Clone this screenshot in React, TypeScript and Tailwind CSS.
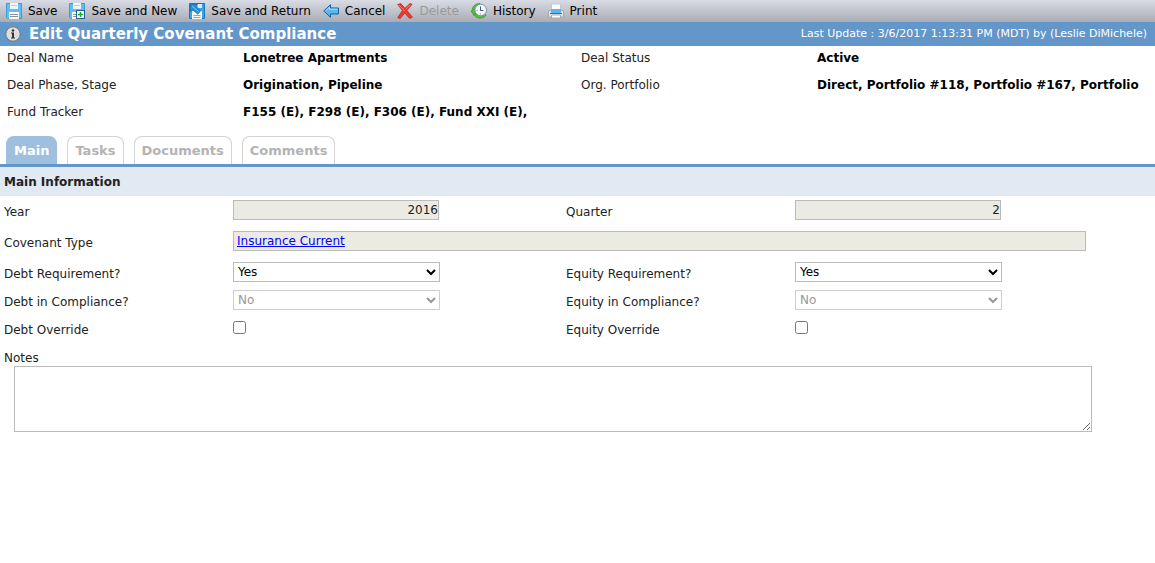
import type { ReactNode } from "react";

const Disk = () => (
    <>
        <path d="M.5 .5h15v15h-14l-1-1z" fill="#62bdf0" stroke="#3f9ad0" />
        <path d="M4 0h8v6H4z" fill="#eef4f8" />
        <path d="M5 2.500h6" stroke="#c3d0da" />
        <path d="M3 9h10v7H3z" fill="#f8f8f8" />
        <path d="M4 11.500h8M4 13.500h8" stroke="#8b949b" />
    </>
);

const Icon = ({ children }: { children: ReactNode }) => (
    <svg viewBox="0 0 16 16" className="h-4 w-4 shrink-0" aria-hidden="true">
        {children}
    </svg>
);

const SaveIcon = () => (
    <Icon>
        <Disk />
    </Icon>
);

const SaveNewIcon = () => (
    <Icon>
        <Disk />
        <rect x="7.500" y="7.500" width="8" height="8" fill="#fff" stroke="#1f5f96" />
        <path d="M11.500 9v5M9 11.500h5" stroke="#23a52b" strokeWidth="1.500" />
    </Icon>
);

const SaveReturnIcon = () => (
    <Icon>
        <path d="M.5 .5h15v15H.5z" fill="#3aa2e2" stroke="#1c76b4" />
        <path d="M3 8h10v8H3z" fill="#f5f7f9" />
        <path d="M4.500 12.500h7M4.500 14.500h7" stroke="#9aa2a8" />
        <path d="M8 1h5v4H9z" fill="#d5ebf8" />
        <path d="M1.500 1.500h7L6.300 3.700l5.200 4.200-2.700 3.300-5.300-4.700-2 2z" fill="#2790d6" stroke="#1668a8" strokeWidth=".7" strokeLinejoin="round" />
        <path d="M3 3l6.500 5.500" stroke="#82cdf6" />
    </Icon>
);

const CancelIcon = () => (
    <Icon>
        <path d="M.7 8L7.500 1.700V5h8v6h-8v3.300z" fill="#55b9f0" stroke="#145f9e" strokeLinejoin="round" />
        <path d="M2.500 8L6.500 4.200V6.200h8" fill="none" stroke="#a9e0fb" />
    </Icon>
);

const DeleteIcon = () => (
    <Icon>
        <path
            d="M.7 1.500L3.800.6 8 5.300 13 .5l2 .8-5.100 6.200 5.500 6.700-2.700 1.300L7.700 10l-4.500 5.600-2.500-1 4.700-7z"
            fill="#ee3a2c"
            stroke="#b5241b"
            strokeWidth=".7"
            strokeLinejoin="round"
        />
        <path d="M2 2l5.700 6M13.400 1.700L9 6" stroke="#ff8a78" strokeWidth=".8" />
    </Icon>
);

const HistoryIcon = () => (
    <Icon>
        <path d="M9 .5A7.300 7.300 0 0 0 1 8H0l3 4.500L6.300 8H4a4.500 4.500 0 0 1 5-4.500z" fill="#55bd39" stroke="#278a20" strokeWidth=".6" />
        <path d="M3.300 12.200A7.300 7.300 0 0 0 15 12.300l-2-2a5 5 0 0 1-7-.8z" fill="#55bd39" stroke="#278a20" strokeWidth=".6" />
        <circle cx="9.700" cy="7" r="5.800" fill="#f3f7fb" stroke="#7e95b0" />
        <path d="M9.500 3.500v4h3" fill="none" stroke="#43546a" />
        <path d="M9.500 10.500v1M5.500 7.500h1" stroke="#7a8797" />
    </Icon>
);

const PrintIcon = () => (
    <Icon>
        <path d="M3.500 1h9v7h-9z" fill="#fafbfc" stroke="#c3c9cf" />
        <path d="M.5 7.500h2.500v1h10v-1h2.500v6.500H.5z" fill="#e3e7eb" stroke="#a3acb5" />
        <path d="M3 6h10v5H3z" fill="#58b7ec" />
        <path d="M2 10.500h12" stroke="#2179b8" />
        <path d="M3.500 12h9v3h-9z" fill="#fff" stroke="#a4abb3" />
    </Icon>
);

const InfoIcon = () => (
    <Icon>
        <circle cx="8" cy="8" r="7.200" fill="#dededc" stroke="#747a82" />
        <circle cx="8" cy="4.500" r="1.200" fill="#333" />
        <path d="M6 6.500H9v5h1v1H6v-1h1v-4H6z" fill="#333" />
    </Icon>
);

const actions = [
    { label: "Save", icon: <SaveIcon /> },
    { label: "Save and New", icon: <SaveNewIcon /> },
    { label: "Save and Return", icon: <SaveReturnIcon /> },
    { label: "Cancel", icon: <CancelIcon /> },
    { label: "Delete", icon: <DeleteIcon />, disabled: true },
    { label: "History", icon: <HistoryIcon /> },
    { label: "Print", icon: <PrintIcon /> },
];

const leftSummary = [
    ["Deal Name", "Lonetree Apartments"],
    ["Deal Phase, Stage", "Origination, Pipeline"],
    ["Fund Tracker", "F155 (E), F298 (E), F306 (E), Fund XXI (E),"],
];

const rightSummary = [
    ["Deal Status", "Active"],
    ["Org. Portfolio", "Direct, Portfolio #118, Portfolio #167, Portfolio"],
];

const tabs = ["Main", "Tasks", "Documents", "Comments"];

const Summary = ({ rows }: { rows: string[][] }) => (
    <dl className="grid auto-rows-[27px] grid-cols-[236px_1fr] content-start leading-6">
        {rows.map(([label, value]) => (
            <div key={label} className="contents">
                <dt>{label}</dt>
                <dd className="font-bold whitespace-nowrap text-black">{value}</dd>
            </div>
        ))}
    </dl>
);

const Row = ({ id, label, children }: { id: string; label: string; children: ReactNode }) => (
    <div className="grid grid-cols-[229px_1fr] items-start">
        <label htmlFor={id} className="pt-1 leading-4">{label}</label>
        {children}
    </div>
);

const NumberField = ({ id, label, value }: { id: string; label: string; value: string }) => (
    <Row id={id} label={label}>
        <input id={id} readOnly defaultValue={value} className="h-5 w-[206px] border border-[#bbb] bg-[#ebebe4] text-right" />
    </Row>
);

const SelectField = ({ id, label, value, disabled }: { id: string; label: string; value: string; disabled?: boolean }) => (
    <Row id={id} label={label}>
        <select id={id} defaultValue={value} disabled={disabled} className="h-5 w-[207px] border border-[#bbb] bg-white text-black disabled:text-[#6d6d6d] disabled:opacity-70">
            <option>Yes</option>
            <option>No</option>
        </select>
    </Row>
);

const CheckField = ({ id, label }: { id: string; label: string }) => (
    <Row id={id} label={label}>
        <input id={id} type="checkbox" className="mt-[3px] h-[13px] w-[13px]" />
    </Row>
);

const App = () => {
    return (
        <div className="min-h-screen bg-white font-['Verdana','DejaVu_Sans',sans-serif] text-[12px] text-[#222]">
            <div className="flex h-[22px] items-center gap-3 bg-linear-to-b from-[#d9dce5] to-[#a9acb4] px-1.5">
                {actions.map((action) => (
                    <button key={action.label} type="button" disabled={action.disabled} className="flex items-center gap-1.5 whitespace-nowrap text-black disabled:text-[#999]">
                        {action.icon}
                        {action.label}
                    </button>
                ))}
            </div>

            <header className="flex h-6 items-center justify-between bg-[#6396c9] pr-2 pl-[5px] text-white">
                <div className="flex items-center gap-2">
                    <InfoIcon />
                    <h1 className="text-[15px] font-bold">Edit Quarterly Covenant Compliance</h1>
                </div>
                <span className="text-[11px]">Last Update : 3/6/2017 1:13:31 PM (MDT) by (Leslie DiMichele)</span>
            </header>

            <section className="grid h-[90px] grid-cols-2 pl-[7px]">
                <Summary rows={leftSummary} />
                <Summary rows={rightSummary} />
            </section>

            <nav className="flex items-end gap-2.5 border-b-3 border-[#6396c9] pl-1.5 text-[13px] font-bold">
                {tabs.map((tab) => (
                    <a
                        key={tab}
                        href="#"
                        className={
                            tab === "Main"
                                ? "h-7 rounded-t-lg border border-b-0 border-[#9fbfdf] bg-[#9fbfdf] px-[7px] leading-7 text-white"
                                : "h-7 rounded-t-lg border border-b-0 border-[#d3d3d3] px-[7px] leading-7 text-[#b3b3b3]"
                        }
                    >
                        {tab}
                    </a>
                ))}
            </nav>

            <main>
                <h2 className="h-[29px] bg-[#e1e9f3] pl-1 leading-[31px] font-bold">Main Information</h2>
                <form className="pt-1 pr-[27px] pl-1">
                    <div className="grid h-[31px] grid-cols-2">
                        <NumberField id="year" label="Year" value="2016" />
                        <NumberField id="quarter" label="Quarter" value="2" />
                    </div>
                    <div className="h-[31px] pr-[42px]">
                        <div className="grid grid-cols-[229px_1fr] items-start">
                            <span className="pt-1 leading-4">Covenant Type</span>
                            <div className="h-5 border border-[#bbb] bg-[#ebebe4] px-[3px] leading-[18px]">
                                <a href="#" className="text-[#0000ff] underline">Insurance Current</a>
                            </div>
                        </div>
                    </div>
                    <div className="grid auto-rows-[28px] grid-cols-2">
                        <SelectField id="debt-requirement" label="Debt Requirement?" value="Yes" />
                        <SelectField id="equity-requirement" label="Equity Requirement?" value="Yes" />
                        <SelectField id="debt-compliance" label="Debt in Compliance?" value="No" disabled />
                        <SelectField id="equity-compliance" label="Equity in Compliance?" value="No" disabled />
                        <CheckField id="debt-override" label="Debt Override" />
                        <CheckField id="equity-override" label="Equity Override" />
                    </div>
                    <div className="pr-9">
                        <label htmlFor="notes" className="block pt-1 leading-4">Notes</label>
                        <div className="pl-2.5">
                            <textarea id="notes" className="block h-[66px] w-full resize border border-[#bbb] bg-white" />
                        </div>
                    </div>
                </form>
            </main>
        </div>
    );
};

export default App;
